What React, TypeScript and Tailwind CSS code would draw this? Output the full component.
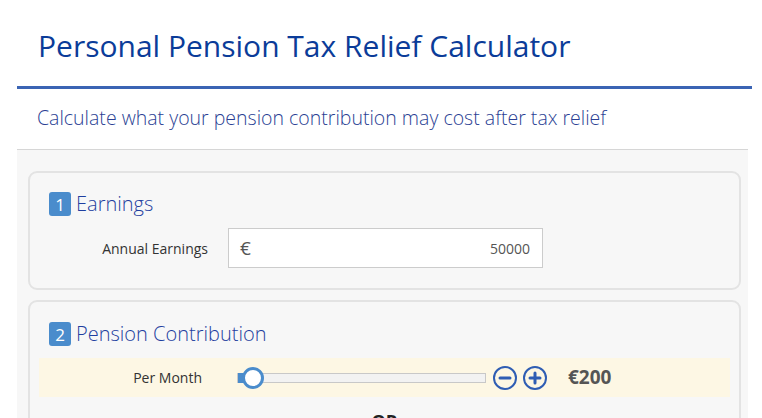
import React from "react";

const font = { fontFamily: '"Open Sans", "Liberation Sans", sans-serif' };

function Badge({ n }: { n: number }) {
  return (
    <span className="flex h-[24px] w-[22px] items-center justify-center rounded-[3px] bg-[#4a8ccc] text-[17px] leading-none text-white">
      {n}
    </span>
  );
}

export default function App() {
  return (
    <div className="h-[418px] w-[762px] overflow-hidden bg-white" style={font}>
      <div className="ml-[17px] w-[735px]">
        {/* Header */}
        <h1 className="pl-[21px] pt-[27px] pb-[21px] text-[30px] leading-[38px] font-normal text-[#0b3c99]">
          Personal Pension Tax Relief Calculator
        </h1>
        <div className="h-[3px] bg-[#3b64b4]" />
        <p className="pl-[20px] pt-[15px] pb-[17px] text-[19.5px] leading-[28px] font-light text-[#2b3f94]">
          Calculate what your pension contribution may cost after tax relief
        </p>

        {/* Form panel */}
        <div className="w-[731px] border-t border-[#d6d6d6] bg-[#f7f7f7] pl-[11px] pr-[7px] pt-[21px] pb-4">
          {/* Earnings */}
          <div className="h-[119px] rounded-[9px] border-2 border-[#e3e3e3] px-[19px] pt-[18px]">
            <div className="flex items-center gap-[5px]">
              <Badge n={1} />
              <span className="text-[20px] leading-[26px] font-light text-[#1f3fa0]">Earnings</span>
            </div>
            <div className="mt-[11px] flex items-center">
              <span className="w-[159px] text-right text-[14px] text-[#333]">Annual Earnings</span>
              <div className="ml-[20px] flex h-[40px] w-[315px] items-center justify-between border border-[#cccccc] bg-white pl-[11px] pr-[12px]">
                <span className="text-[19px] text-[#555]">€</span>
                <span className="text-[14px] text-[#555]">50000</span>
              </div>
            </div>
          </div>

          {/* Pension Contribution */}
          <div className="mt-[10px] h-[140px] rounded-[9px] border-2 border-[#e3e3e3] px-[9px] pt-[19px]">
            <div className="flex items-center gap-[5px] pl-[10px]">
              <Badge n={2} />
              <span className="text-[20px] leading-[26px] font-light text-[#1f3fa0]">Pension Contribution</span>
            </div>
            <div className="mt-[11px] flex h-[39px] items-center bg-[#fdf7e4]">
              <span className="w-[163px] text-right text-[14px] text-[#333]">Per Month</span>
              <div className="relative ml-[35px] h-[10px] w-[249px] border border-[#c8c8c8] bg-[#f2f2f2]">
                <div className="absolute left-0 top-[-1px] h-[10px] w-[14px] bg-[#4a8ccc]" />
                <div className="absolute left-[4px] top-[-7px] h-[22px] w-[22px] rounded-full border-[3px] border-[#4a8ccc] bg-white" />
              </div>
              <svg width="24" height="24" viewBox="0 0 24 24" className="ml-[7px]">
                <circle cx="12" cy="12" r="11" fill="none" stroke="#2f5db3" strokeWidth="2" />
                <path d="M7 12h10" stroke="#2f5db3" strokeWidth="3" strokeLinecap="round" />
              </svg>
              <svg width="24" height="24" viewBox="0 0 24 24" className="ml-[6px]">
                <circle cx="12" cy="12" r="11" fill="none" stroke="#2f5db3" strokeWidth="2" />
                <path d="M7 12h10M12 7v10" stroke="#2f5db3" strokeWidth="3" strokeLinecap="round" />
              </svg>
              <span className="ml-[21px] text-[19px] font-bold text-[#555]">€200</span>
            </div>
            <div className="mt-[11px] text-center text-[18px] font-bold text-[#222]">OR</div>
          </div>
        </div>
      </div>
    </div>
  );
}
